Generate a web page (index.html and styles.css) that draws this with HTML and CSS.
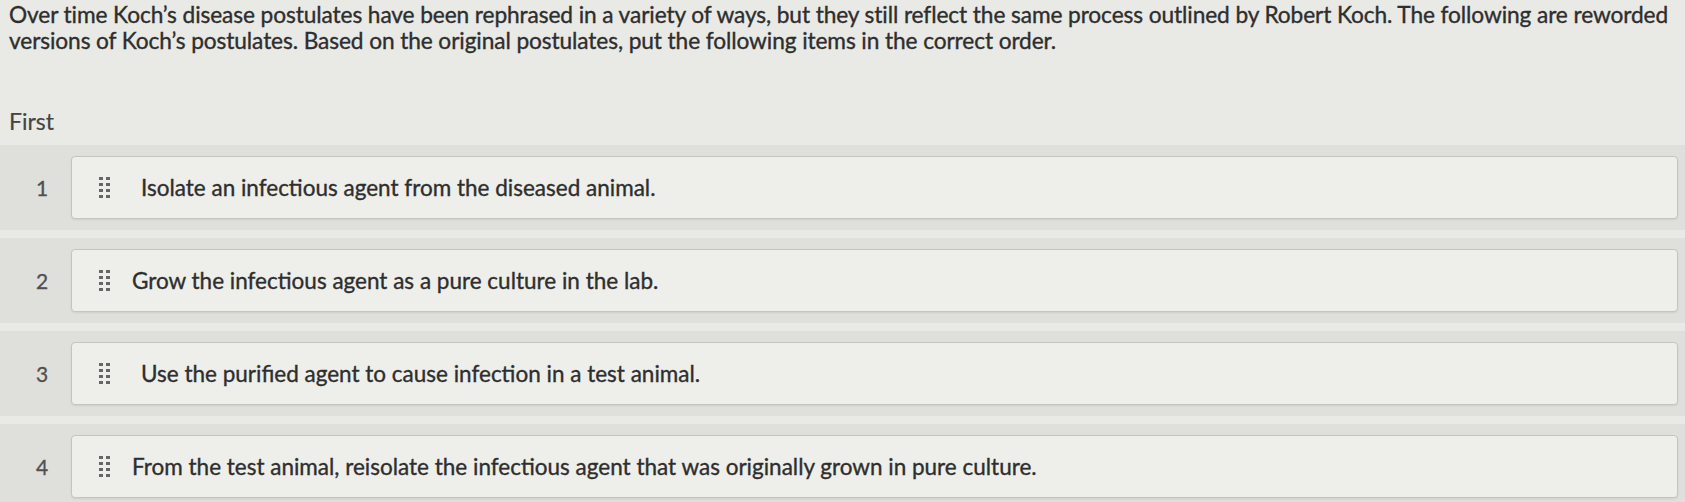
FILE: index.html
```html
<!DOCTYPE html>
<html>
<head>
<meta charset="utf-8">
<link rel="stylesheet" href="styles.css">
</head>
<body>
<div class="page">
  <p class="prompt">Over time Koch’s disease postulates have been rephrased in a variety of ways, but they still reflect the same process outlined by Robert Koch. The following are reworded versions of Koch’s postulates. Based on the original postulates, put the following items in the correct order.</p>
  <div class="label">First</div>
  <div class="list">
    <div class="row">
      <div class="num">1</div>
      <div class="card"><span class="handle"><i></i><i></i><i></i><i></i><i></i><i></i><i></i><i></i></span><span class="txt">Isolate an infectious agent from the diseased animal.</span></div>
    </div>
    <div class="row">
      <div class="num">2</div>
      <div class="card"><span class="handle"><i></i><i></i><i></i><i></i><i></i><i></i><i></i><i></i></span><span class="txt shift">Grow the infectious agent as a pure culture in the lab.</span></div>
    </div>
    <div class="row">
      <div class="num">3</div>
      <div class="card"><span class="handle"><i></i><i></i><i></i><i></i><i></i><i></i><i></i><i></i></span><span class="txt">Use the purified agent to cause infection in a test animal.</span></div>
    </div>
    <div class="row">
      <div class="num">4</div>
      <div class="card"><span class="handle"><i></i><i></i><i></i><i></i><i></i><i></i><i></i><i></i></span><span class="txt shift">From the test animal, reisolate the infectious agent that was originally grown in pure culture.</span></div>
    </div>
  </div>
</div>
</body>
</html>
```
FILE: styles.css
```css
html, body {
  margin: 0;
  padding: 0;
  background: #e9e9e5;
}
body {
  font-family: Lato, "Open Sans", sans-serif;
  color: #333;
  overflow: hidden;
}
.page {
  width: 1685px;
  height: 502px;
  overflow: hidden;
}
.prompt {
  margin: 0;
  padding: 2px 4px 0 9px;
  font-size: 22.7px;
  line-height: 26px;
  letter-spacing: -0.1px;
  color: #2e2e2e;
  -webkit-text-stroke: 0.35px #2e2e2e;
}
.label {
  padding: 54px 0 0 9px;
  font-size: 23px;
  line-height: 26px;
  color: #444;
  -webkit-text-stroke: 0.2px #444;
}
.list {
  margin-top: 11px;
  display: flex;
  flex-direction: column;
  gap: 8px;
}
.row {
  display: flex;
  align-items: center;
  height: 85px;
  background: #dfdfdb;
  padding-right: 7px;
}
.num {
  width: 71px;
  box-sizing: border-box;
  padding-left: 36px;
  font-size: 21px;
  color: #505050;
  -webkit-text-stroke: 0.3px #505050;
}
.card {
  flex: 1;
  height: 63px;
  box-sizing: border-box;
  background: #eeeeea;
  border: 1.5px solid #c4c4c0;
  border-radius: 4px;
  display: flex;
  align-items: center;
  box-shadow: 0 1px 2px rgba(0,0,0,0.08);
}
.handle {
  margin-left: 27px;
  width: 11px;
  display: grid;
  grid-template-columns: 4px 4px;
  column-gap: 3px;
  row-gap: 3px;
}
.handle i {
  display: block;
  width: 4px;
  height: 3px;
  background: #666;
}
.txt {
  margin-left: 31px;
  font-size: 22.5px;
  color: #2e2e2e;
  -webkit-text-stroke: 0.35px #2e2e2e;
}
.txt.shift {
  margin-left: 22px;
}
```
